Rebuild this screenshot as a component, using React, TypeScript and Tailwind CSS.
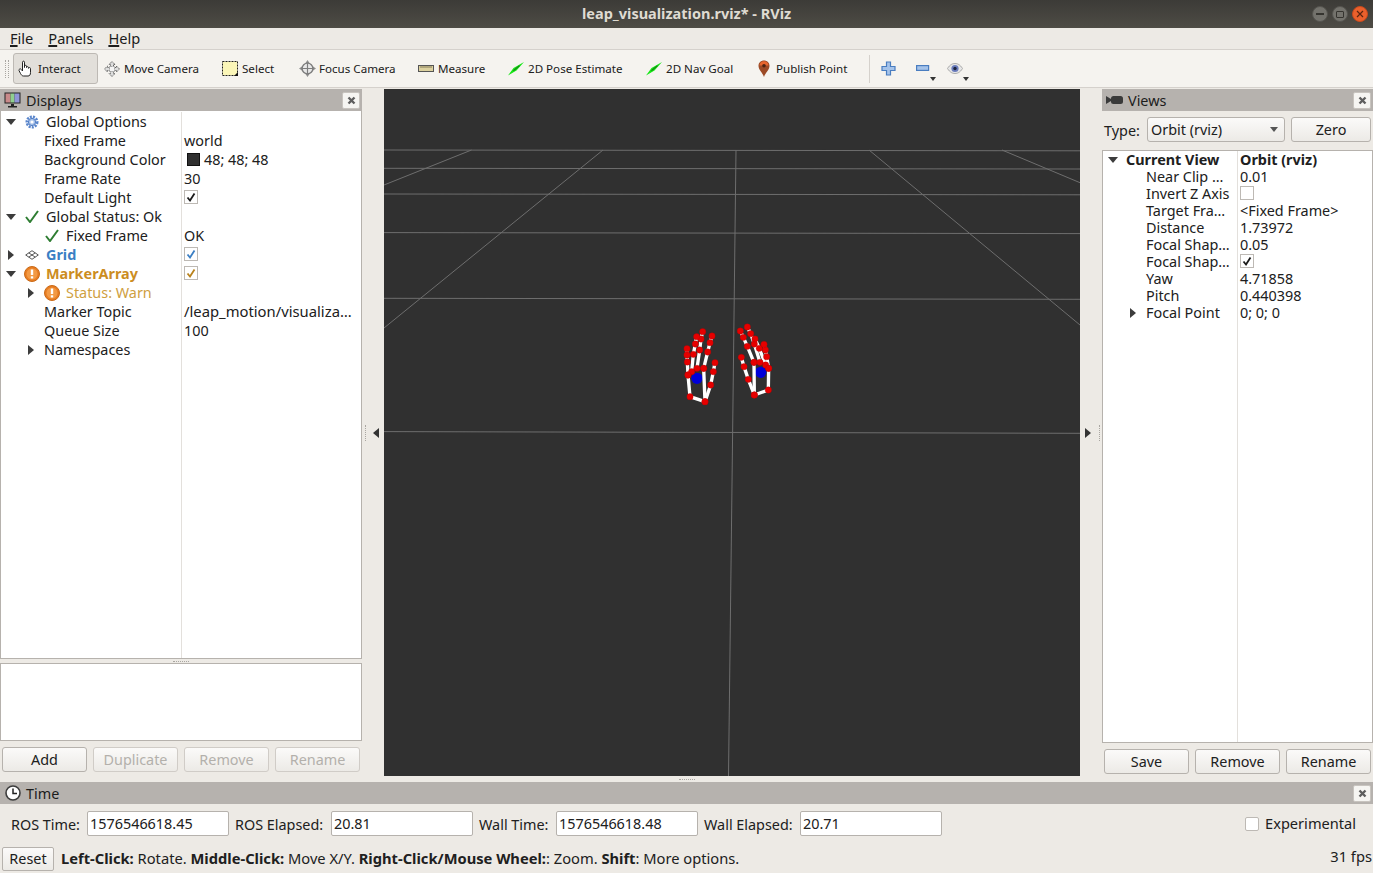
import React from "react";

const font = { fontFamily: '"Noto Sans", "Open Sans", sans-serif' };

function Caret({ open }: { open?: boolean }) {
  return open ? (
    <svg width="10" height="6" viewBox="0 0 10 6">
      <path d="M0 0H10L5 6Z" fill="#3c3c3c" />
    </svg>
  ) : (
    <svg width="6" height="10" viewBox="0 0 6 10">
      <path d="M0 0V10L6 5Z" fill="#3c3c3c" />
    </svg>
  );
}

function Check({ color = "#1a1a1a" }: { color?: string }) {
  return (
    <span className="mb-[2px] flex h-[14px] w-[14px] items-center justify-center border border-[#bdb9b4] bg-white">
      <svg width="10" height="10" viewBox="0 0 10 10">
        <path d="M1.5 5.5L4 8.5L8.5 1.5" fill="none" stroke={color} strokeWidth="1.8" />
      </svg>
    </span>
  );
}

function GreenCheck() {
  return (
    <svg width="14" height="13" viewBox="0 0 14 13">
      <path d="M1 7L5 12L13 1" fill="none" stroke="#2e7d32" strokeWidth="2" />
    </svg>
  );
}

function WarnIcon() {
  return (
    <svg width="16" height="16" viewBox="0 0 16 16">
      <circle cx="8" cy="8" r="7.5" fill="#e87d22" stroke="#c96a18" />
      <circle cx="8" cy="8" r="5.5" fill="#f29a45" />
      <rect x="6.8" y="3.5" width="2.4" height="5.5" fill="#fff" />
      <rect x="6.8" y="10.3" width="2.4" height="2.2" fill="#fff" />
    </svg>
  );
}

function GearIcon() {
  return (
    <svg width="14" height="14" viewBox="0 0 14 14">
      <circle cx="7" cy="7" r="5.2" fill="none" stroke="#5a86cc" strokeWidth="2.6" strokeDasharray="2 1.1" />
      <circle cx="7" cy="7" r="3.6" fill="#a9c3ea" stroke="#4f7cc4" />
      <circle cx="7" cy="7" r="1.6" fill="#fff" />
    </svg>
  );
}

function GridIcon() {
  return (
    <svg width="14" height="10" viewBox="0 0 14 10">
      <path d="M7 .7L13.3 5L7 9.3L.7 5ZM3.8 2.9L10.2 7.1M10.2 2.9L3.8 7.1" fill="#fff" stroke="#555" strokeWidth="1" />
    </svg>
  );
}

function MonitorIcon() {
  return (
    <svg width="17" height="16" viewBox="0 0 17 16">
      <rect x=".5" y=".5" width="16" height="11" fill="#222" />
      <rect x="1.5" y="1.5" width="5" height="9" fill="#c98a8a" />
      <rect x="6.5" y="1.5" width="4" height="9" fill="#8fcf8f" />
      <rect x="10.5" y="1.5" width="5" height="9" fill="#8f95d8" />
      <rect x="7" y="12" width="3" height="2" fill="#222" />
      <rect x="4" y="14" width="9" height="1.5" fill="#222" />
    </svg>
  );
}

function CameraIcon() {
  return (
    <svg width="17" height="10" viewBox="0 0 17 10">
      <path d="M0 1L5 4V6L0 9Z" fill="#3a3a3a" />
      <rect x="5" y="1" width="12" height="8" rx="2.5" fill="#3a3a3a" />
    </svg>
  );
}

function ClockIcon() {
  return (
    <svg width="16" height="16" viewBox="0 0 16 16">
      <circle cx="8" cy="8" r="7" fill="#fff" stroke="#3c3c3c" strokeWidth="1.6" />
      <path d="M8 3.5V8.5H12" fill="none" stroke="#222" strokeWidth="1.5" />
    </svg>
  );
}

function CloseBox() {
  return (
    <span className="flex h-[17px] w-[18px] items-center justify-center rounded-[2px] border border-[#c8c4bf] bg-[#f6f5f2]">
      <svg width="9" height="9" viewBox="0 0 9 9">
        <path d="M1.5 1.5L7.5 7.5M7.5 1.5L1.5 7.5" stroke="#5e5e5e" strokeWidth="2.4" />
      </svg>
    </span>
  );
}

function HandIcon() {
  return (
    <svg width="17" height="17" viewBox="0 0 17 17" className="shrink-0">
      <path
        d="M4.5 9V2.2C4.5 .8 6.5 .8 6.5 2.2V7.5V6.2C6.5 5 8.5 5 8.5 6.2V7.5C8.5 6.4 10.5 6.4 10.5 7.5V8.3C10.5 7.3 12.5 7.3 12.5 8.5V12.5C12.5 15 11.5 16 10 16H5.5C4 16 3.5 15 2.5 13.5L1 10.5C.6 9 2.6 8.2 3.4 9.6L4.5 11Z"
        fill="#fff"
        stroke="#222"
        strokeWidth="1"
      />
    </svg>
  );
}

function MoveIcon() {
  return (
    <svg width="16" height="16" viewBox="0 0 16 16">
      <path
        d="M8 .5L11 3.5H9.5V6.5H12.5V5L15.5 8L12.5 11V9.5H9.5V12.5H11L8 15.5L5 12.5H6.5V9.5H3.5V11L.5 8L3.5 5V6.5H6.5V3.5H5Z"
        fill="#dedede"
        stroke="#666"
        strokeWidth="1"
        strokeDasharray="1.4 .6"
      />
      <rect x="5.5" y="5.5" width="5" height="5" fill="#f4f4f4" stroke="#888" strokeWidth=".8" strokeDasharray="1 .6" />
    </svg>
  );
}

function SelectIcon() {
  return (
    <svg width="16" height="15" viewBox="0 0 16 15">
      <rect x=".5" y=".5" width="15" height="14" fill="#fbf6b8" stroke="#222" strokeDasharray="2 1" />
      <path d="M16 11V15H12Z" fill="#111" />
    </svg>
  );
}

function FocusIcon() {
  return (
    <svg width="17" height="17" viewBox="0 0 17 17" className="shrink-0">
      <path d="M8.5 0L10.5 3H6.5ZM8.5 17L10.5 14H6.5ZM0 8.5L3 6.5V10.5ZM17 8.5L14 6.5V10.5Z" fill="#8e8e8e" />
      <circle cx="8.5" cy="8.5" r="5.4" fill="#e8e8e8" stroke="#7e7e7e" strokeWidth="1.4" />
      <path d="M8.5 2.5V14.5M2.5 8.5H14.5" stroke="#7e7e7e" strokeWidth="1.2" />
    </svg>
  );
}

function RulerIcon() {
  return (
    <svg width="16" height="7" viewBox="0 0 16 7">
      <rect x=".5" y=".5" width="15" height="6" fill="#dcd19f" stroke="#555" />
      <path d="M3 1V3M5 1V3M7 1V3M9 1V3M11 1V3M13 1V3" stroke="#6b6248" strokeWidth=".8" />
    </svg>
  );
}

function ArrowIcon() {
  return (
    <svg width="16" height="14" viewBox="0 0 16 14">
      <path d="M0 13.5L5.5 6L8.5 8.5ZM16 0L5.5 6L8.5 8.5Z" fill="#16e616" />
      <path d="M5.5 8.7L11.5 3.6" stroke="#167a16" strokeWidth="1.1" />
    </svg>
  );
}

function PinIcon() {
  return (
    <svg width="12" height="17" viewBox="0 0 12 17">
      <path d="M6 17C4.5 12.5 .5 10 .5 5.8C.5 2.6 3 .5 6 .5C9 .5 11.5 2.6 11.5 5.8C11.5 10 7.5 12.5 6 17Z" fill="#9c4a26" />
      <path d="M1.5 5.5C1.5 3 3.5 1.3 6 1.3C8.5 1.3 10.5 3 10.5 5.5Z" fill="#e8662f" />
      <circle cx="6" cy="5.8" r="1.8" fill="#4f2412" />
    </svg>
  );
}

function PlusIcon() {
  return (
    <svg width="15" height="15" viewBox="0 0 15 15">
      <path d="M5.5 1H9.5V5.5H14V9.5H9.5V14H5.5V9.5H1V5.5H5.5Z" fill="#a5c3ea" stroke="#4a7dc0" strokeWidth="1.2" />
    </svg>
  );
}

function MinusIcon() {
  return (
    <svg width="15" height="6" viewBox="0 0 15 6" className="mb-[1px]">
      <rect x="1.6" y=".6" width="12" height="4.8" fill="#a5c3ea" stroke="#4a7dc0" strokeWidth="1.2" />
    </svg>
  );
}

function EyeIcon() {
  return (
    <svg width="16" height="11" viewBox="0 0 16 11" className="mb-[1px]">
      <path d="M.5 5.5C3 1.5 5.5.5 8 .5C10.5.5 13 1.5 15.5 5.5C13 9.5 10.5 10.5 8 10.5C5.5 10.5 3 9.5.5 5.5Z" fill="#e6e6e6" stroke="#aaa" />
      <circle cx="8" cy="5.5" r="3.6" fill="#6a7cbc" />
      <circle cx="8" cy="5.5" r="1.7" fill="#1d2440" />
    </svg>
  );
}

function SmallDrop() {
  return (
    <svg width="6" height="4" viewBox="0 0 6 4" className="mt-[20px]">
      <path d="M0 0H6L3 4Z" fill="#333" />
    </svg>
  );
}

function ToolButton({ width, icon, label, active, narrow }: { width: string; icon: React.ReactNode; label: string; active?: boolean; narrow?: boolean }) {
  return (
    <div className={`flex h-[31px] items-center ${width} ${active ? "rounded-[3px] border border-[#bdb9b4] bg-[#e2dfda] pl-[4px]" : "pl-[6px]"}`}>
      <span className={`flex items-center justify-center ${narrow ? "w-[12px]" : "w-[16px]"}`}>{icon}</span>
      <span className={`mt-[1px] whitespace-nowrap text-[11.6px] text-[#202020] ${narrow ? "ml-[6px]" : "ml-[4px]"}`}>{label}</span>
    </div>
  );
}

function PanelHeader({ icon, title }: { icon: React.ReactNode; title: string }) {
  return (
    <div className="flex h-[22px] items-center justify-between bg-[#b6b2ae] pr-[2px] pl-[4px]">
      <div className="flex items-center">
        <span className="flex w-[17px] items-center justify-center">{icon}</span>
        <span className="ml-[5px] pt-[2px] text-[14.4px] text-[#1c1c1c]">{title}</span>
      </div>
      <CloseBox />
    </div>
  );
}

function Btn({ label, width, disabled }: { label: string; width: string; disabled?: boolean }) {
  return (
    <div
      className={`flex h-[25px] items-center justify-center rounded-[3px] border bg-gradient-to-b from-[#fbfaf9] to-[#eceae6] text-[14.4px] ${width} ${
        disabled ? "border-[#d0ccc7] text-[#b3b0ab]" : "border-[#b6b2ad] text-[#202020]"
      }`}
    >
      {label}
    </div>
  );
}

type RowProps = {
  col: string;
  height: string;
  indent?: boolean;
  caret?: "open" | "closed";
  icon?: React.ReactNode;
  label: string;
  labelClass?: string;
  value?: React.ReactNode;
  valueClass?: string;
};

function Row({ col, height, indent, caret, icon, label, labelClass = "text-[#202020]", value, valueClass = "text-[#202020]" }: RowProps) {
  return (
    <div className={`flex items-center text-[14.4px] ${height}`}>
      <div className={`flex h-full shrink-0 items-center ${col} ${indent ? "pl-[20px]" : ""}`}>
        <span className="flex w-[20px] shrink-0 items-center justify-center">
          {caret && <Caret open={caret === "open"} />}
        </span>
        {icon ? (
          <span className="mr-[4px] flex w-[21px] shrink-0 items-center justify-center">{icon}</span>
        ) : (
          <span className="w-[3px] shrink-0" />
        )}
        <span className={`whitespace-nowrap ${labelClass}`}>{label}</span>
      </div>
      <div className={`pl-[2px] whitespace-nowrap ${valueClass}`}>{value}</div>
    </div>
  );
}

function Field({ label, value, labelWidth }: { label: string; value: string; labelWidth: string }) {
  return (
    <>
      <span className={`whitespace-nowrap pt-[3px] text-[14.4px] text-[#202020] ${labelWidth}`}>{label}</span>
      <div className="flex h-[25px] w-[142px] items-center rounded-[2px] border border-[#b6b2ad] bg-white pl-[2px] text-[14.4px] text-[#202020]">
        {value}
      </div>
    </>
  );
}

type Pt = [number, number];

function Bones({ chains, blue }: { chains: Pt[][]; blue: Pt }) {
  return (
    <>
      <circle cx={blue[0]} cy={blue[1]} r="17" fill="#0000d8" />
      {chains.map((c, i) => (
        <polyline key={i} points={c.map((p) => p.join(",")).join(" ")} fill="none" stroke="#fff" strokeWidth="10" />
      ))}
      {chains.flat().map((p, i) => (
        <circle key={i} cx={p[0]} cy={p[1]} r="9.5" fill="#e60000" stroke="#b00000" strokeWidth="1" />
      ))}
    </>
  );
}

const leftHand: Pt[][] = [
  [[54, 180], [60, 245], [105, 260], [101, 160]],
  [[105, 260], [122, 210], [130, 170], [135, 143]],
  [[101, 160], [113, 111], [120, 83], [126, 63]],
  [[81, 160], [89, 105], [93, 72], [98, 50]],
  [[65, 170], [70, 118], [76, 87], [80, 65]],
  [[54, 180], [52, 141], [51, 120], [51, 101]],
];

const rightHand: Pt[][] = [
  [[252, 142], [253, 240], [295, 225], [296, 160]],
  [[253, 240], [235, 193], [222, 155], [214, 127]],
  [[252, 142], [232, 94], [220, 67], [211, 48]],
  [[270, 142], [253, 87], [242, 56], [232, 36]],
  [[287, 150], [268, 100], [255, 72]],
  [[296, 160], [290, 125], [286, 105], [282, 88]],
];

function Scene() {
  return (
    <svg className="h-[687px] w-[696px]" viewBox="0 0 696 687">
      <g stroke="#6e6e6e" strokeWidth="1" fill="none">
        <path d="M0 61L696 61.8" />
        <path d="M0 79.3L696 80" />
        <path d="M0 105L696 105.8" />
        <path d="M0 143.6L696 144.6" />
        <path d="M0 209.3L696 210.3" />
        <path d="M0 342.6L696 344.3" />
        <path d="M352 61L344.5 687" />
        <path d="M87.5 61L0 96" />
        <path d="M219 61L0 239" />
        <path d="M485 61L696 236" />
        <path d="M618 61L696 93.7" />
      </g>
      <g transform="translate(286 226) scale(0.3333)">
        <Bones chains={leftHand} blue={[81, 190]} />
        <Bones chains={rightHand} blue={[272, 172]} />
      </g>
    </svg>
  );
}

export default function App() {
  return (
    <div className="flex h-[873px] w-[1373px] flex-col overflow-hidden bg-[#edeae5]" style={font}>
      {/* title bar */}
      <div className="flex h-[28px] shrink-0 items-center bg-gradient-to-b from-[#3c3b37] to-[#4e4c45] pr-[5px]">
        <span className="ml-[582px] pb-[1px] text-[14.5px] font-bold text-[#dfdbd2]">leap_visualization.rviz* - RViz</span>
        <div className="ml-auto flex items-center gap-[4px]">
          <span className="flex h-[16px] w-[16px] items-center justify-center rounded-full border border-[#55544f] bg-[#73726c]">
            <span className="h-[1.5px] w-[8px] bg-[#35342f]" />
          </span>
          <span className="flex h-[16px] w-[16px] items-center justify-center rounded-full border border-[#55544f] bg-[#73726c]">
            <span className="h-[7px] w-[8px] rounded-[1px] border border-[#35342f]" />
          </span>
          <span className="flex h-[16px] w-[16px] items-center justify-center rounded-full border border-[#c9491c] bg-[#e9602c]">
            <svg width="8" height="8" viewBox="0 0 8 8">
              <path d="M1 1L7 7M7 1L1 7" stroke="#5a2410" strokeWidth="1.2" />
            </svg>
          </span>
        </div>
      </div>

      {/* menu */}
      <div className="flex h-[21px] shrink-0 items-center gap-[15px] pl-[10px] text-[14.6px] text-[#1c1c1c]">
        <span><span className="underline decoration-2">F</span>ile</span>
        <span><span className="underline decoration-2">P</span>anels</span>
        <span><span className="underline decoration-2">H</span>elp</span>
      </div>

      {/* toolbar */}
      <div className="flex h-[39px] shrink-0 items-center border-y border-[#d5d1cc] bg-[#f5f3ef] pl-[5px]">
        <div className="mr-[4px] h-[18px] w-[4px] border-x border-dotted border-[#a9a6a1]" />
        <ToolButton width="w-[85px]" icon={<HandIcon />} label="Interact" active />
        <ToolButton width="w-[118px]" icon={<MoveIcon />} label="Move Camera" />
        <ToolButton width="w-[77px]" icon={<SelectIcon />} label="Select" />
        <ToolButton width="w-[119px]" icon={<FocusIcon />} label="Focus Camera" />
        <ToolButton width="w-[90px]" icon={<RulerIcon />} label="Measure" />
        <ToolButton width="w-[138px]" icon={<ArrowIcon />} label="2D Pose Estimate" />
        <ToolButton width="w-[112px]" icon={<ArrowIcon />} label="2D Nav Goal" />
        <ToolButton width="w-[117px]" icon={<PinIcon />} label="Publish Point" narrow />
        <div className="h-[28px] w-px bg-[#d5d1cc]" />
        <div className="ml-[11px] flex items-center"><PlusIcon /></div>
        <div className="ml-[19px] flex items-center"><MinusIcon /><SmallDrop /></div>
        <div className="ml-[11px] flex items-center"><EyeIcon /><SmallDrop /></div>
      </div>

      {/* main */}
      <div className="flex h-[688px] shrink-0 pt-px">
        {/* displays */}
        <div className="flex w-[362px] shrink-0 flex-col">
          <PanelHeader icon={<MonitorIcon />} title="Displays" />
          <div className="h-[548px] border border-t-0 border-[#b6b2ad] bg-white pt-px">
            <div className="relative h-full">
              <div className="absolute top-0 bottom-0 left-[180px] w-px bg-[#e3e0dc]" />
              <Row col="w-[181px]" height="h-[19px]" caret="open" icon={<GearIcon />} label="Global Options" />
              <Row col="w-[181px]" height="h-[19px]" indent label="Fixed Frame" value="world" />
              <Row
                col="w-[181px]"
                height="h-[19px]"
                indent
                label="Background Color"
                value={
                  <span className="flex items-center">
                    <span className="mr-[4px] ml-[3px] h-[13px] w-[13px] border border-[#111] bg-[#303030]" />
                    48; 48; 48
                  </span>
                }
              />
              <Row col="w-[181px]" height="h-[19px]" indent label="Frame Rate" value="30" />
              <Row col="w-[181px]" height="h-[19px]" indent label="Default Light" value={<Check />} />
              <Row col="w-[181px]" height="h-[19px]" caret="open" icon={<GreenCheck />} label="Global Status: Ok" />
              <Row col="w-[181px]" height="h-[19px]" indent icon={<GreenCheck />} label="Fixed Frame" value="OK" />
              <Row col="w-[181px]" height="h-[19px]" caret="closed" icon={<GridIcon />} label="Grid" labelClass="font-bold text-[#3b7fc4]" value={<Check color="#3b7fc4" />} />
              <Row col="w-[181px]" height="h-[19px]" caret="open" icon={<WarnIcon />} label="MarkerArray" labelClass="font-bold text-[#cc8d1f]" value={<Check color="#b9821c" />} />
              <Row col="w-[181px]" height="h-[19px]" indent caret="closed" icon={<WarnIcon />} label="Status: Warn" labelClass="text-[#cfa03f]" />
              <Row col="w-[181px]" height="h-[19px]" indent label="Marker Topic" value="/leap_motion/visualiza…" valueClass="text-[14.8px] text-[#202020]" />
              <Row col="w-[181px]" height="h-[19px]" indent label="Queue Size" value="100" />
              <Row col="w-[181px]" height="h-[19px]" indent caret="closed" label="Namespaces" />
            </div>
          </div>
          <div className="flex h-[4px] items-center justify-center">
            <div className="h-px w-[16px] border-t border-dotted border-[#a9a6a1]" />
          </div>
          <div className="h-[78px] border border-[#b6b2ad] bg-white" />
          <div className="mt-[6px] flex gap-[6px] px-[2px]">
            <Btn label="Add" width="w-[85px]" />
            <Btn label="Duplicate" width="w-[85px]" disabled />
            <Btn label="Remove" width="w-[85px]" disabled />
            <Btn label="Rename" width="w-[85px]" disabled />
          </div>
        </div>

        {/* left gutter */}
        <div className="flex w-[22px] shrink-0 items-center pl-[3px]">
          <div className="h-[16px] w-px border-l border-dotted border-[#a9a6a1]" />
          <svg width="6" height="10" viewBox="0 0 6 10" className="ml-[7px]">
            <path d="M6 0V10L0 5Z" fill="#333" />
          </svg>
        </div>

        {/* 3D view */}
        <div className="h-[687px] w-[696px] shrink-0 bg-[#303030]">
          <Scene />
        </div>

        {/* right gutter */}
        <div className="flex w-[22px] shrink-0 items-center justify-end pr-[2px]">
          <svg width="6" height="10" viewBox="0 0 6 10" className="mr-[8px]">
            <path d="M0 0V10L6 5Z" fill="#333" />
          </svg>
          <div className="h-[16px] w-px border-l border-dotted border-[#a9a6a1]" />
        </div>

        {/* views */}
        <div className="flex w-[271px] shrink-0 flex-col">
          <PanelHeader icon={<CameraIcon />} title="Views" />
          <div className="flex h-[39px] items-start pt-[6px] pr-[2px] pl-[2px]">
            <span className="w-[43px] pt-[3px] text-[14.4px] text-[#202020]">Type:</span>
            <div className="flex h-[25px] w-[138px] items-center justify-between rounded-[3px] border border-[#b6b2ad] bg-gradient-to-b from-[#fbfaf9] to-[#eceae6] pr-[6px] pl-[3px] text-[14.4px] text-[#202020]">
              Orbit (rviz)
              <svg width="8" height="5" viewBox="0 0 8 5">
                <path d="M0 0H8L4 5Z" fill="#555" />
              </svg>
            </div>
            <div className="ml-auto">
              <Btn label="Zero" width="w-[80px]" />
            </div>
          </div>
          <div className="relative h-[593px] border border-[#b6b2ad] bg-white">
            <div className="absolute top-0 bottom-0 left-[134px] w-px bg-[#e3e0dc]" />
            <Row col="w-[135px]" height="h-[17px]" caret="open" label="Current View" labelClass="font-bold text-[#202020]" value="Orbit (rviz)" valueClass="font-bold text-[#202020]" />
            <Row col="w-[135px]" height="h-[17px]" indent label="Near Clip …" value="0.01" />
            <Row col="w-[135px]" height="h-[17px]" indent label="Invert Z Axis" value={<Check color="transparent" />} />
            <Row col="w-[135px]" height="h-[17px]" indent label="Target Fra…" value="<Fixed Frame>" />
            <Row col="w-[135px]" height="h-[17px]" indent label="Distance" value="1.73972" />
            <Row col="w-[135px]" height="h-[17px]" indent label="Focal Shap…" value="0.05" />
            <Row col="w-[135px]" height="h-[17px]" indent label="Focal Shap…" value={<Check />} />
            <Row col="w-[135px]" height="h-[17px]" indent label="Yaw" value="4.71858" />
            <Row col="w-[135px]" height="h-[17px]" indent label="Pitch" value="0.440398" />
            <Row col="w-[135px]" height="h-[17px]" indent caret="closed" label="Focal Point" value="0; 0; 0" />
          </div>
          <div className="mt-[6px] flex gap-[6px] pl-[2px]">
            <Btn label="Save" width="w-[85px]" />
            <Btn label="Remove" width="w-[85px]" />
            <Btn label="Rename" width="w-[85px]" />
          </div>
        </div>
      </div>

      {/* time */}
      <div className="flex h-[6px] shrink-0 items-center justify-center">
        <div className="h-px w-[16px] border-t border-dotted border-[#a9a6a1]" />
      </div>
      <div className="shrink-0">
        <PanelHeader icon={<ClockIcon />} title="Time" />
        <div className="flex h-[41px] items-start pt-[7px] pr-[17px] pl-[11px]">
          <Field label="ROS Time:" value="1576546618.45" labelWidth="w-[76px]" />
          <div className="w-[6px]" />
          <Field label="ROS Elapsed:" value="20.81" labelWidth="w-[96px]" />
          <div className="w-[6px]" />
          <Field label="Wall Time:" value="1576546618.48" labelWidth="w-[77px]" />
          <div className="w-[6px]" />
          <Field label="Wall Elapsed:" value="20.71" labelWidth="w-[96px]" />
          <div className="ml-auto flex h-[25px] items-center gap-[6px]">
            <span className="h-[14px] w-[14px] rounded-[2px] border border-[#bdb9b4] bg-white" />
            <span className="pt-[1px] text-[14.6px] text-[#202020]">Experimental</span>
          </div>
        </div>
      </div>

      {/* status */}
      <div className="flex h-[28px] shrink-0 items-center justify-between pr-[1px] pl-[2px] text-[14.7px] text-[#202020]">
        <div className="flex items-center">
          <div className="flex h-[24px] w-[52px] items-center justify-center rounded-[2px] border border-[#b6b2ad] bg-gradient-to-b from-[#fbfaf9] to-[#eceae6] text-[14.4px]">
            Reset
          </div>
          <span className="mb-[1px] ml-[7px] whitespace-nowrap">
            <b>Left-Click:</b> Rotate. <b>Middle-Click:</b> Move X/Y. <b>Right-Click/Mouse Wheel:</b>: Zoom. <b>Shift</b>: More options.
          </span>
        </div>
        <span className="mb-[6px]">31 fps</span>
      </div>
    </div>
  );
}
